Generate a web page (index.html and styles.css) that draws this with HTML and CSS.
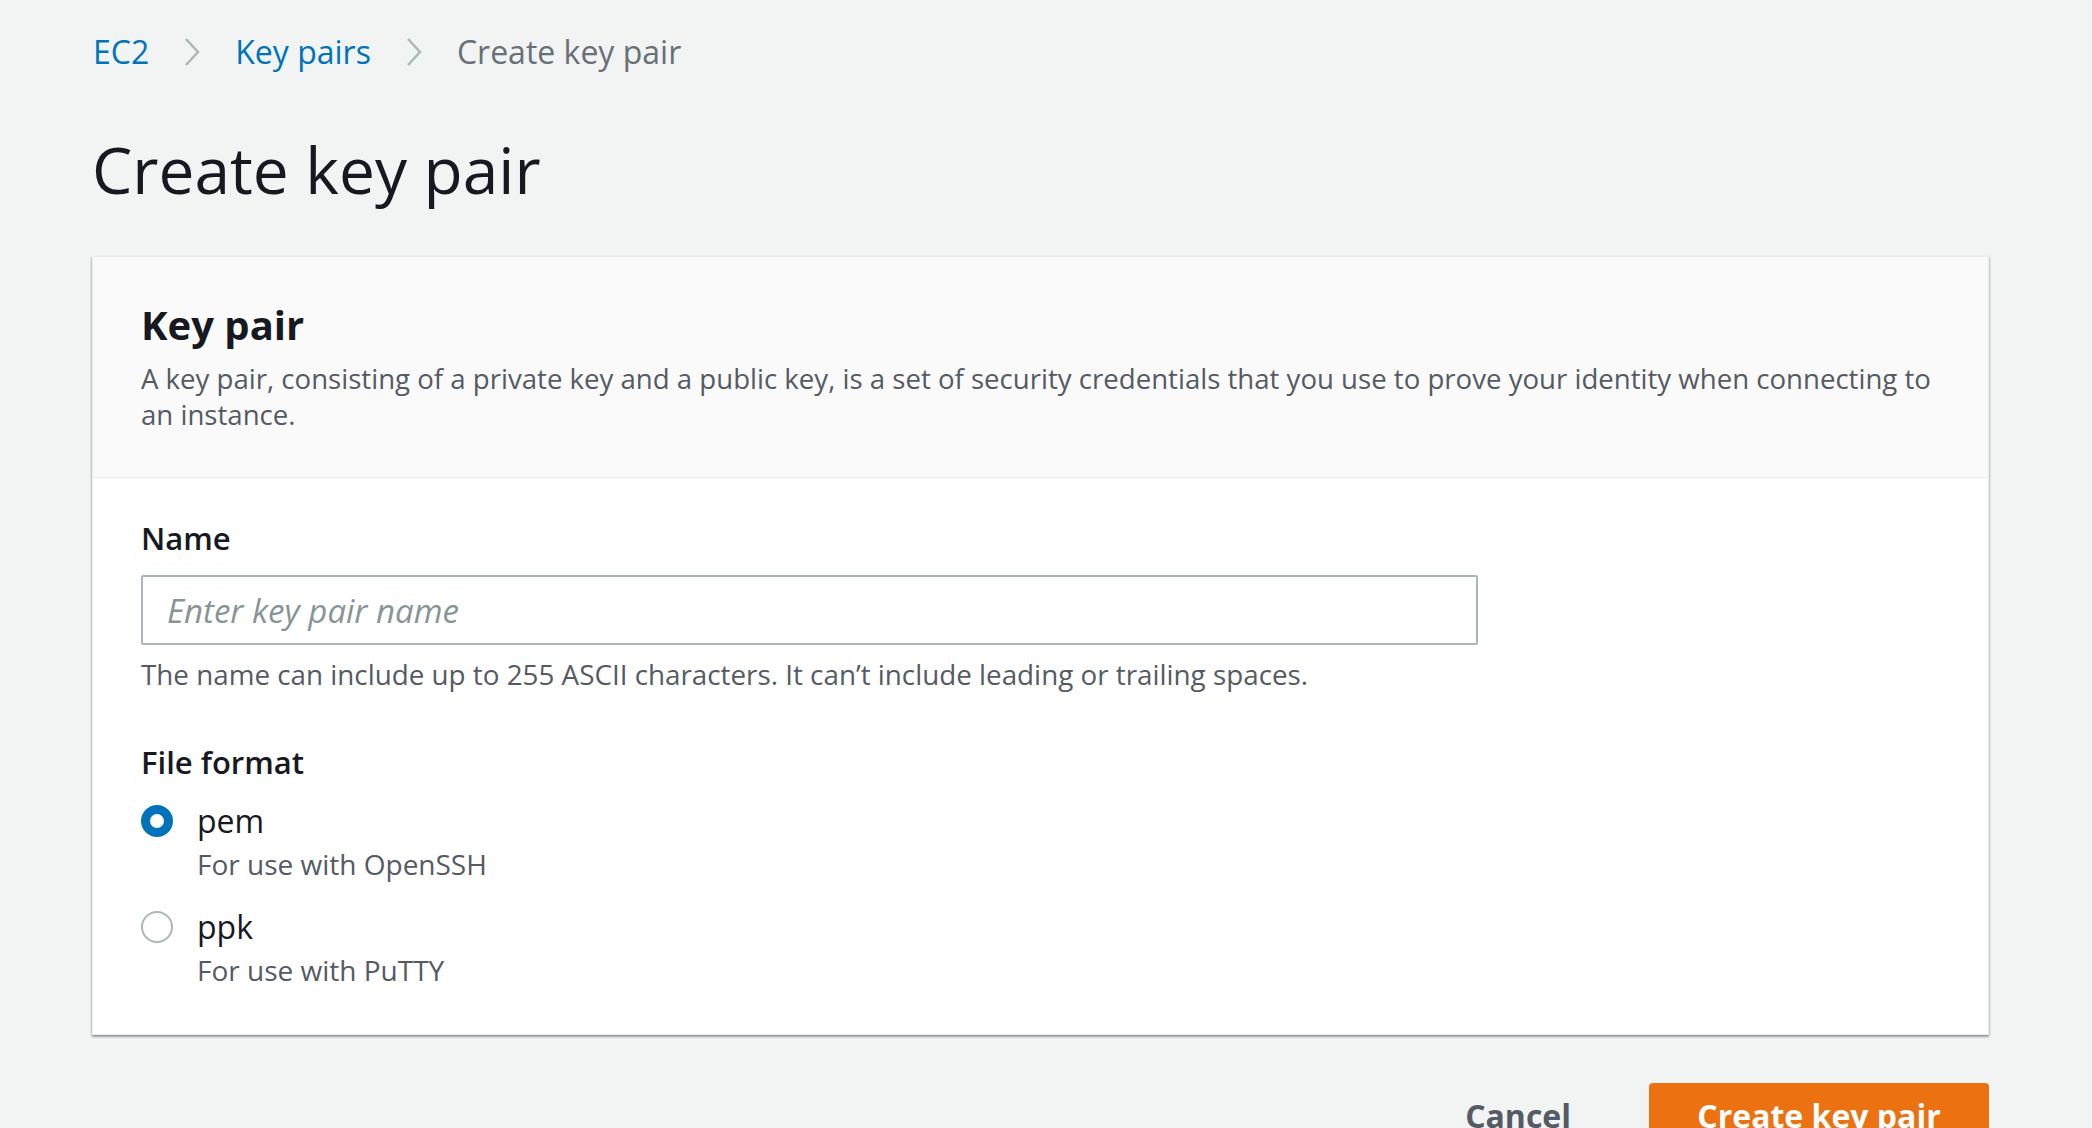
FILE: index.html
```html
<!DOCTYPE html>
<html lang="en">
<head>
<meta charset="utf-8">
<title>Create key pair</title>
<link rel="stylesheet" href="styles.css">
</head>
<body>
<div class="page">
  <nav class="breadcrumbs">
    <a class="crumb-link" href="#">EC2</a>
    <svg class="chevron" viewBox="0 0 16 30" width="16" height="30"><polyline points="2,2 14,15 2,28" fill="none" stroke="currentColor" stroke-width="2.4"/></svg>
    <a class="crumb-link" href="#">Key pairs</a>
    <svg class="chevron" viewBox="0 0 16 30" width="16" height="30"><polyline points="2,2 14,15 2,28" fill="none" stroke="currentColor" stroke-width="2.4"/></svg>
    <span class="crumb-current">Create key pair</span>
  </nav>

  <h1 class="title">Create key pair</h1>

  <section class="panel">
    <header class="panel-header">
      <h2 class="panel-title">Key pair</h2>
      <p class="panel-desc">A key pair, consisting of a private key and a public key, is a set of security credentials that you use to prove your identity when connecting to an instance.</p>
    </header>
    <div class="panel-body">
      <div class="field">
        <label class="field-label" for="kpname">Name</label>
        <input class="text-input" id="kpname" type="text" placeholder="Enter key pair name">
        <p class="hint">The name can include up to 255 ASCII characters. It can’t include leading or trailing spaces.</p>
      </div>
      <div class="field field-format">
        <div class="field-label">File format</div>
        <div class="radio-group">
          <div class="radio-item">
            <span class="radio radio-checked"></span>
            <div class="radio-text">
              <div class="radio-label">pem</div>
              <div class="radio-desc">For use with OpenSSH</div>
            </div>
          </div>
          <div class="radio-item">
            <span class="radio"></span>
            <div class="radio-text">
              <div class="radio-label">ppk</div>
              <div class="radio-desc">For use with PuTTY</div>
            </div>
          </div>
        </div>
      </div>
    </div>
  </section>

  <div class="actions">
    <button class="btn btn-cancel" type="button">Cancel</button>
    <button class="btn btn-primary" type="button">Create key pair</button>
  </div>
</div>
</body>
</html>
```

FILE: styles.css
```css
* { box-sizing: border-box; }

html, body {
  margin: 0;
  padding: 0;
  background: #f2f3f3;
  font-family: "Open Sans", "Noto Sans", "Liberation Sans", sans-serif;
  color: #16191f;
  overflow: hidden;
}

.page {
  padding: 30px 103px 0 92px;
}

.breadcrumbs {
  display: flex;
  align-items: center;
  height: 44px;
  font-size: 32px;
  line-height: 44px;
  padding-left: 1px;
}

.crumb-link {
  color: #0073bb;
  text-decoration: none;
}

.crumb-current {
  color: #687078;
}

.chevron {
  color: #aab7b8;
  margin: 0 35px 0 35px;
  flex: none;
}

.title {
  margin: 56px 0 0 0;
  font-size: 64px;
  line-height: 80px;
  font-weight: 400;
  color: #16191f;
}

.panel {
  margin-top: 46px;
  background: #ffffff;
  border: 1px solid #eaeded;
  box-shadow: 0 2px 2px 0 rgba(0, 28, 36, 0.3), 1px 1px 2px 0 rgba(0, 28, 36, 0.12), -1px 1px 2px 0 rgba(0, 28, 36, 0.12);
}

.panel-header {
  background: #fafafa;
  border-bottom: 1px solid #eaeded;
  padding: 44px 48px 45px 48px;
}

.panel-title {
  margin: 0;
  font-size: 40px;
  line-height: 48px;
  font-weight: 700;
  color: #16191f;
}

.panel-desc {
  margin: 11px 0 0 0;
  font-size: 27.6px;
  line-height: 36px;
  color: #545b64;
}

.panel-body {
  padding: 38px 48px 46px 48px;
}

.field-label {
  display: block;
  font-size: 31px;
  line-height: 44px;
  font-weight: 600;
  color: #16191f;
}

.text-input {
  display: block;
  width: 1337px;
  height: 70px;
  margin-top: 15px;
  padding: 0 24px;
  border: 2px solid #aab7b8;
  border-radius: 2px;
  background: #fff;
  font-family: inherit;
  font-size: 33px;
  color: #16191f;
  outline: none;
}

.text-input::placeholder {
  color: #879596;
  font-style: italic;
}

.hint {
  margin: 11px 0 0 0;
  font-size: 27.8px;
  line-height: 36px;
  color: #545b64;
}

.field-format {
  margin-top: 48px;
}

.radio-group {
  margin-top: 15px;
  display: flex;
  flex-direction: column;
  gap: 23px;
}

.radio-item {
  display: flex;
  align-items: flex-start;
}

.radio {
  flex: none;
  width: 32px;
  height: 32px;
  margin: 6px 24px 0 0;
  border-radius: 50%;
  border: 2px solid #aab7b8;
  background: #fff;
}

.radio-checked {
  border: 9px solid #0073bb;
}

.radio-label {
  font-size: 32px;
  line-height: 44px;
  color: #16191f;
}

.radio-desc {
  margin-top: 3px;
  font-size: 28px;
  line-height: 36px;
  color: #545b64;
}

.actions {
  margin-top: 48px;
  display: flex;
  justify-content: flex-end;
  align-items: center;
  gap: 38px;
}

.btn {
  font-family: inherit;
  font-size: 32px;
  font-weight: 700;
  line-height: 44px;
  border: none;
  cursor: pointer;
}

.btn-cancel {
  background: transparent;
  color: #545b64;
  padding: 10px 40px;
}

.btn-primary {
  background: #ec7211;
  color: #ffffff;
  border-radius: 4px;
  height: 66px;
  padding: 0 48px;
  width: 340px;
}
```
